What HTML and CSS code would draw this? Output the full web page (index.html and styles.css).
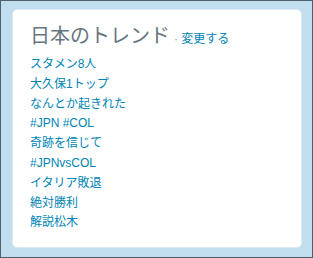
FILE: index.html
```html
<!DOCTYPE html>
<html>
<head>
    <meta charset="utf-8">
    <link rel="stylesheet" href="styles.css">
</head>
<body>
    <div class="frame">
        <div class="trends">
            <h3 class="trends-title">日本のトレンド<small>· <a href="#">変更する</a></small></h3>
            <ul class="trend-list">
                <li><a href="#">スタメン8人</a></li>
                <li><a href="#">大久保1トップ</a></li>
                <li><a href="#">なんとか起きれた</a></li>
                <li><a href="#">#JPN #COL</a></li>
                <li><a href="#">奇跡を信じて</a></li>
                <li><a href="#">#JPNvsCOL</a></li>
                <li><a href="#">イタリア敗退</a></li>
                <li><a href="#">絶対勝利</a></li>
                <li><a href="#">解説松木</a></li>
            </ul>
        </div>
    </div>
</body>
</html>
```

FILE: styles.css
```css
html, body {
    margin: 0;
    height: 100%;
}

body {
    font-family: "Liberation Sans", "Noto Sans CJK JP", sans-serif;
    font-size: 12px;
    color: #333;
}

a {
    color: #0084b4;
    text-decoration: none;
}

.frame {
    box-sizing: border-box;
    height: 100%;
    border: 1px solid #4f5e6a;
    background-color: #c0deed;
    padding: 8px 10px 9px 11px;
}

.trends {
    box-sizing: border-box;
    height: 100%;
    background-color: #fff;
    border: 1px solid #dfe9f0;
    border-radius: 5px;
    padding: 13px 17px;
}

.trends-title {
    margin: 0 0 3px;
    font-size: 20px;
    font-weight: normal;
    color: #66757f;
    line-height: 26px;
}

.trends-title small {
    margin-left: 4px;
    font-size: 12px;
    color: #999;
}

.trend-list {
    list-style: none;
    margin: 0;
    padding: 0;
}

.trend-list li {
    line-height: 19.8px;
}
```
